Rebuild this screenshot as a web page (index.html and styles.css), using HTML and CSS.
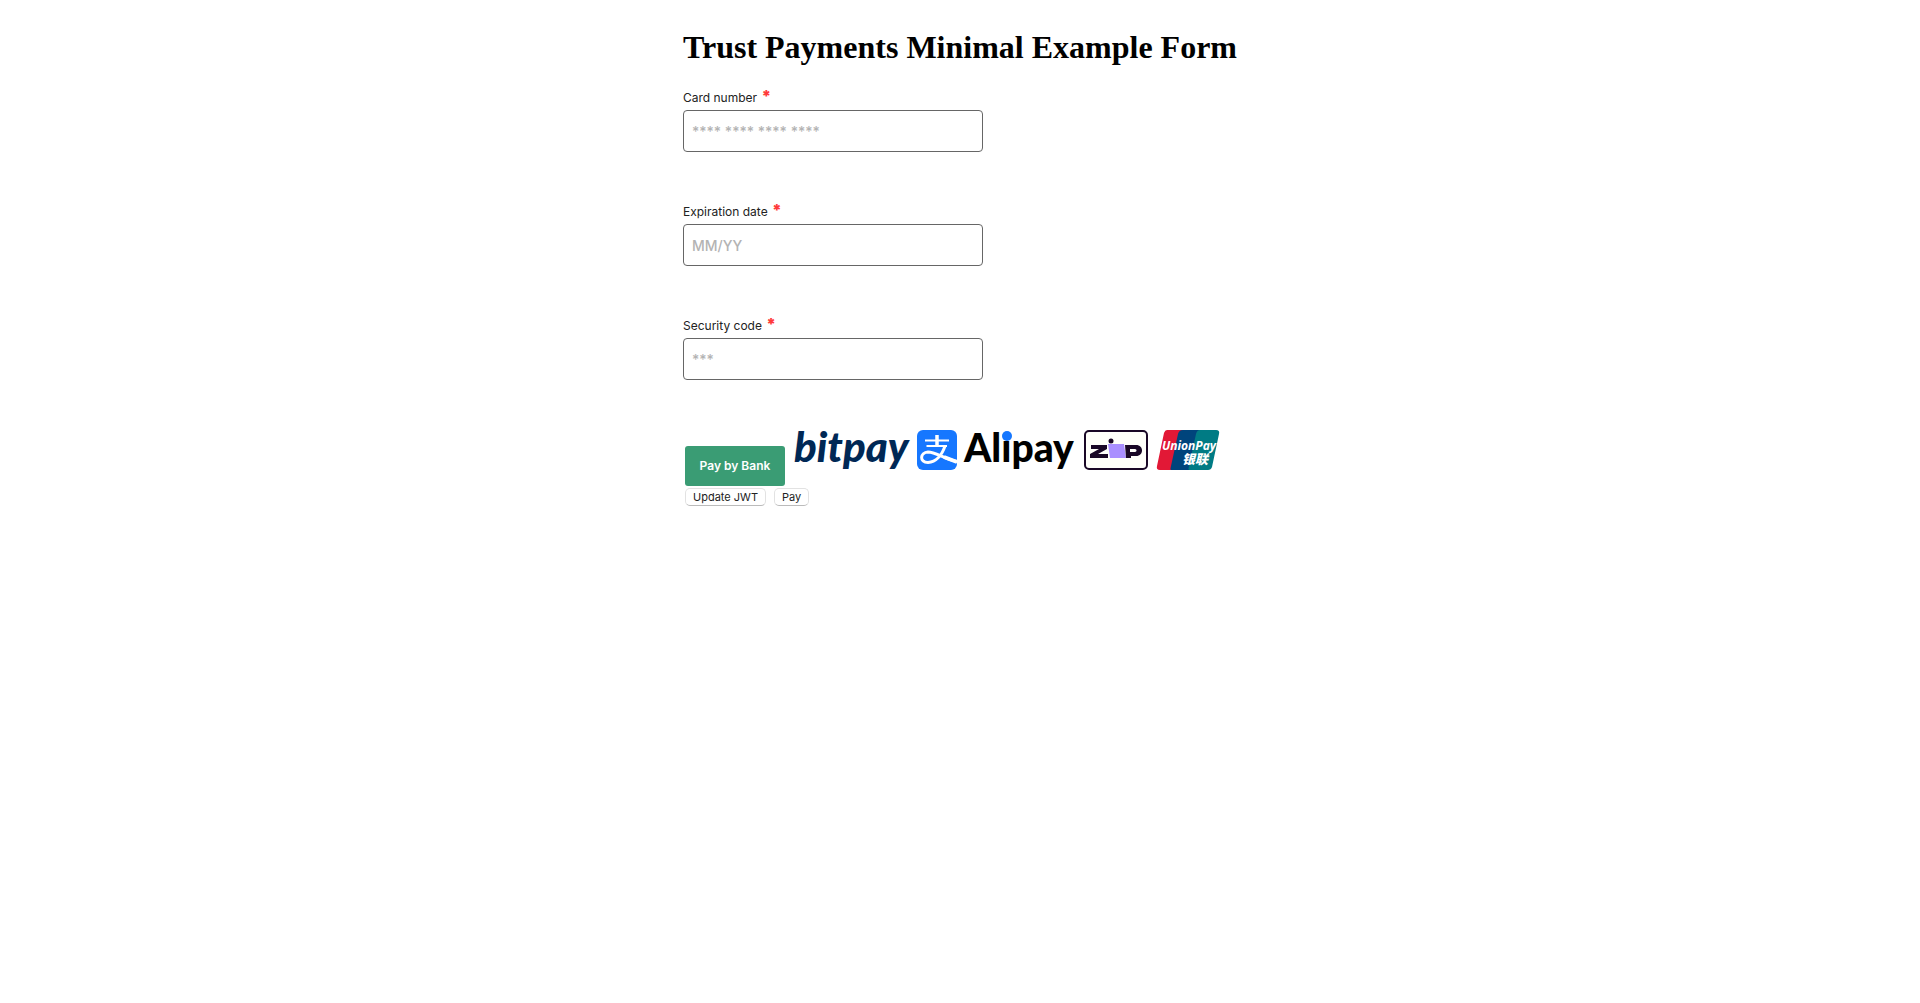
FILE: index.html
```html
<!DOCTYPE html>
<html lang="en">
<head>
<meta charset="utf-8">
<title>Trust Payments Minimal Example Form</title>
<link rel="stylesheet" href="styles.css">
</head>
<body>
<main class="page">
  <h1 class="title">Trust Payments Minimal Example Form</h1>
  <form class="form">
    <div class="field">
      <label class="label" for="card">Card number <span class="required">*</span></label>
      <input class="input" id="card" type="text" placeholder="**** **** **** ****">
    </div>
    <div class="field">
      <label class="label" for="expiry">Expiration date <span class="required">*</span></label>
      <input class="input" id="expiry" type="text" placeholder="MM/YY">
    </div>
    <div class="field">
      <label class="label" for="code">Security code <span class="required">*</span></label>
      <input class="input" id="code" type="text" placeholder="***">
    </div>
    <div class="methods">
      <button class="bank" type="button">Pay by Bank</button>
      <svg class="logo" width="114" height="40" viewBox="0 0 114 40" role="img" aria-label="bitpay">
        <text class="bitpay" x="-1" y="32">bitpay</text>
      </svg>
      <svg class="logo" width="159" height="40" viewBox="0 0 159 40" role="img" aria-label="Alipay">
        <rect width="40" height="40" rx="6" fill="#1677ff"/>
        <g fill="none" stroke="#fff">
          <path d="M8 10.500H32M9.500 16H30" stroke-width="2"/>
          <path d="M20 5V16" stroke-width="3.500"/>
          <path d="M28 16C25 25 19 32 11 32.500C2 32.500 3 22.500 11 22C19 22 27 29 40 31.500" stroke-width="3"/>
          <path d="M27 27L40 32" stroke-width="4"/>
        </g>
        <text class="alipay" x="47" y="32">Alipay</text>
        <circle cx="90" cy="6" r="5" fill="#1677ff"/>
      </svg>
      <svg class="logo" width="64" height="40" viewBox="0 0 64 40" role="img" aria-label="Zip">
        <rect x="1" y="1" width="62" height="38" rx="4" fill="#fffffa" stroke="#1a0826" stroke-width="2"/>
        <path d="M7 15H23V19L14 24H24V28H6V24L15 19H7Z" fill="#1a0826"/>
        <path d="M24 14H40L42 28H26Z" fill="#aa8fff"/>
        <circle cx="27" cy="11" r="2.500" fill="#1a0826"/>
        <path fill-rule="evenodd" d="M41 15H52C60 15 60 26 52 26H47V28H42ZM46 19V22H51C53 22 53 19 51 19Z" fill="#1a0826"/>
      </svg>
      <svg class="logo" width="64" height="40" viewBox="0 0 64 40" role="img" aria-label="UnionPay">
        <path d="M11 0H28L19 40H4Q0 40 1 36L8 3Q9 0 11 0Z" fill="#e21836"/>
        <path d="M27 0H46L36 40H15Q14 39 15 36L22 4Q23 0 27 0Z" fill="#00447c"/>
        <path d="M44 0H60Q64 0 63 4L56 37Q55 40 52 40H33Q32 39 33 36L40 4Q41 0 44 0Z" fill="#007b84"/>
        <text class="union" x="6" y="20">UnionPay</text>
        <text class="union-cn" x="26" y="34">银联</text>
      </svg>
    </div>
    <div class="actions">
      <button class="action" type="button">Update JWT</button>
      <button class="action" type="submit">Pay</button>
    </div>
  </form>
</main>
</body>
</html>
```
FILE: styles.css
```css
body {
  margin: 0;
  background: #fff;
  font-family: Inter, "Liberation Sans", sans-serif;
}

.page {
  width: max-content;
  max-width: 100%;
  margin: 0 auto;
  padding-top: 28px;
}

.title {
  margin: 0 0 20px;
  font: bold 32px/38px "Liberation Serif", "Times New Roman", serif;
  color: #000;
}

.field {
  display: flex;
  flex-direction: column;
  align-items: flex-start;
  height: 114px;
}

.label {
  height: 24px;
  font-size: 12px;
  line-height: 24px;
  color: #222;
}

.required {
  margin-left: 1px;
  font-size: 16px;
  font-weight: 900;
  line-height: 16px;
  color: #ff3b3b;
}

.input {
  box-sizing: border-box;
  width: 300px;
  max-width: 100%;
  height: 42px;
  padding: 0 8px;
  border: 1px solid #666;
  border-radius: 4px;
  background: #fff;
  font: 500 14px/20px Inter, "Liberation Sans", sans-serif;
}

.input::placeholder {
  color: #b3b3b3;
}

.methods {
  display: flex;
  flex-wrap: wrap;
  align-items: flex-start;
  gap: 0 8px;
  padding: 2px 0 0 2px;
}

.logo {
  overflow: visible;
}

.bank {
  width: 100px;
  height: 40px;
  margin: 16px 2px 0 0;
  padding: 0;
  border: 0;
  border-radius: 3px;
  background: #3a9c74;
  color: #fff;
  font: 600 12px/16px Inter, "Liberation Sans", sans-serif;
}

.bitpay {
  font: italic 900 42px Lato, sans-serif;
  fill: #002855;
}

.alipay {
  font: 900 39px Lato, sans-serif;
  fill: #000;
}

.union {
  font: italic 700 12px "Open Sans", sans-serif;
  fill: #fff;
}

.union-cn {
  font: italic 900 13px "Noto Sans CJK SC", sans-serif;
  fill: #fff;
}

.actions {
  display: flex;
  gap: 8px;
  padding: 2px 2px 0;
}

.action {
  height: 18px;
  padding: 0 7px;
  border: 1px solid #e2e2e2;
  border-bottom-color: #bbb;
  border-radius: 5px;
  background: #fff;
  color: #222;
  font: 11px/16px Inter, "Liberation Sans", sans-serif;
}
```
